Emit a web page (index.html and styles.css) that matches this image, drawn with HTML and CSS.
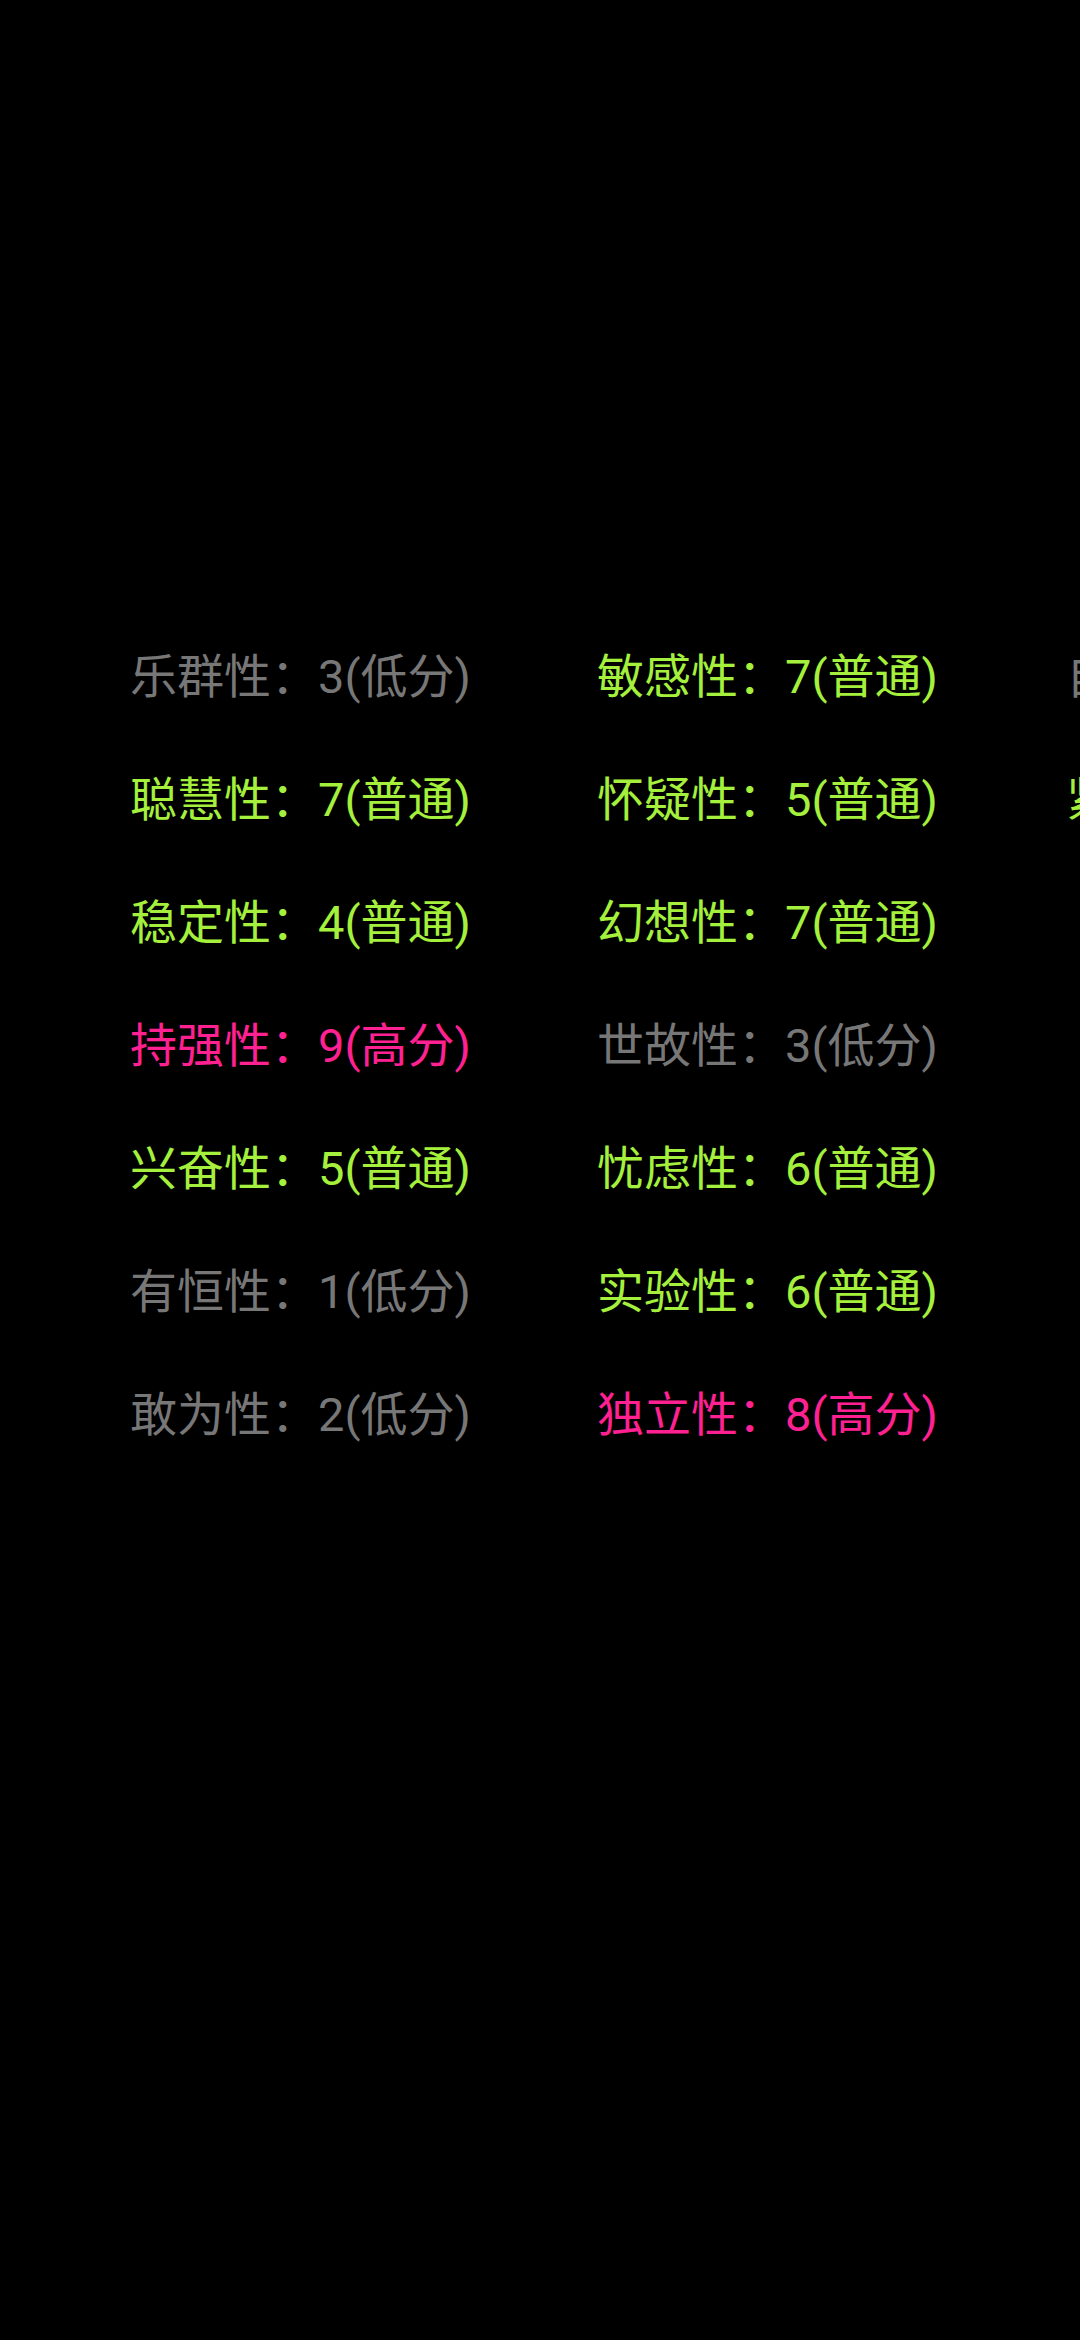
FILE: index.html
```html
<!DOCTYPE html>
<html lang="zh-CN">
<head>
<meta charset="utf-8">
<title>16PF</title>
<link rel="stylesheet" href="styles.css">
</head>
<body>
<div class="grid">
  <div class="item low">乐群性：3(低分)</div>
  <div class="item mid">聪慧性：7(普通)</div>
  <div class="item mid">稳定性：4(普通)</div>
  <div class="item high">持强性：9(高分)</div>
  <div class="item mid">兴奋性：5(普通)</div>
  <div class="item low">有恒性：1(低分)</div>
  <div class="item low">敢为性：2(低分)</div>
  <div class="item mid">敏感性：7(普通)</div>
  <div class="item mid">怀疑性：5(普通)</div>
  <div class="item mid">幻想性：7(普通)</div>
  <div class="item low">世故性：3(低分)</div>
  <div class="item mid">忧虑性：6(普通)</div>
  <div class="item mid">实验性：6(普通)</div>
  <div class="item high">独立性：8(高分)</div>
  <div class="item low">自律性：4(低分)</div>
  <div class="item mid">紧张性：6(普通)</div>
</div>
</body>
</html>
```
FILE: styles.css
```css
html, body {
  margin: 0;
  padding: 0;
  background: #000;
}
body {
  width: 1080px;
  height: 2340px;
  overflow: hidden;
  font-family: Roboto, "Noto Sans CJK SC", sans-serif;
}
.grid {
  display: grid;
  grid-auto-flow: column;
  grid-template-rows: repeat(7, 123px);
  grid-template-columns: 467px 469px 400px;
  padding: 615px 0 0 130px;
}
.item {
  font-size: 47px;
  line-height: 123px;
  white-space: nowrap;
}
.low { color: #777777; }
.mid { color: #a4f03c; }
.high { color: #ff2092; }
```
